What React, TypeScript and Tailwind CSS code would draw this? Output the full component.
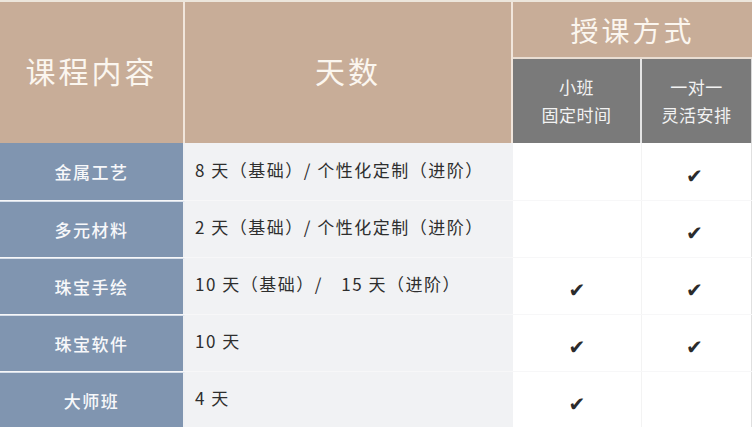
const font = "font-['Noto_Sans_CJK_SC','Noto_Sans',sans-serif]";

type Row = { name: string; days: string; small: boolean; one: boolean };

const rows: Row[] = [
  { name: "金属工艺", days: "8 天（基础）/ 个性化定制（进阶）", small: false, one: true },
  { name: "多元材料", days: "2 天（基础）/ 个性化定制（进阶）", small: false, one: true },
  { name: "珠宝手绘", days: "10 天（基础）/　15 天（进阶）", small: true, one: true },
  { name: "珠宝软件", days: "10 天", small: true, one: true },
  { name: "大师班", days: "4 天", small: true, one: false },
];

const Check = () => (
  <span className="font-['DejaVu_Sans',sans-serif] text-[20px] leading-none text-[#2b2b2b]">✔</span>
);

export default function App() {
  return (
    <div className={`${font} w-[752px] h-[427px] bg-white overflow-hidden border-t-2 border-[#ece6dc]`}>
      <div className="grid grid-cols-[185px_328px_129px_110px] grid-rows-[57px_84px]">
        <div className="row-span-2 flex items-center justify-center bg-[#c8ad98] border-r-2 border-[#f1e6dc] pb-1">
          <span className="text-[30px] tracking-[3px] text-[#fbf6ef]">课程内容</span>
        </div>
        <div className="row-span-2 flex items-center justify-center bg-[#c8ad98] border-r-2 border-[#f1e6dc] pb-1">
          <span className="text-[30px] tracking-[3px] text-[#fbf6ef]">天数</span>
        </div>
        <div className="col-span-2 flex items-center justify-center bg-[#c8ad98] border-b-2 border-[#e9ddd2]">
          <span className="text-[28px] tracking-[3px] text-[#fbf6ef]">授课方式</span>
        </div>
        <div className="flex flex-col items-center justify-center bg-[#7a7a7a] border-r-2 border-[#e4e4e4] text-[17px] leading-[28px] tracking-[0.5px] text-[#f2f2f2]">
          <span>小班</span>
          <span>固定时间</span>
        </div>
        <div className="flex flex-col items-center justify-center bg-[#7a7a7a] border-r border-[#d8d8d8] text-[17px] leading-[28px] tracking-[0.5px] text-[#f2f2f2]">
          <span>一对一</span>
          <span>灵活安排</span>
        </div>
      </div>
      <div className="flex flex-col">
        {rows.map((r, i) => (
          <div
            key={r.name}
            className={`grid grid-cols-[185px_328px_129px_110px] h-[57px] ${i > 0 ? "border-t border-[#f7f7f8]" : ""}`}
          >
            <div className={`flex items-center justify-center bg-[#8095b0] border-r-2 border-[#eef0f3] ${i > 0 ? "border-t border-t-[#d7dfea]" : ""}`}>
              <span className="text-[17px] font-medium tracking-[1.5px] text-[#f7f8fa]">{r.name}</span>
            </div>
            <div className="flex items-center bg-[#f1f2f4] pl-[10px] pb-1">
              <span className="text-[17px] tracking-[1.5px] text-[#2e2e2e] whitespace-pre">{r.days}</span>
            </div>
            <div className="flex items-center justify-center border-r border-[#f3f3f3] pt-2">
              {r.small && <Check />}
            </div>
            <div className="flex items-center justify-center border-r border-[#e0e0e0] pt-2 pr-1">
              {r.one && <Check />}
            </div>
          </div>
        ))}
      </div>
    </div>
  );
}
